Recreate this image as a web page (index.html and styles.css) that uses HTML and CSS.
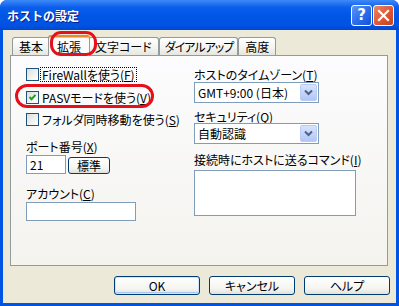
FILE: index.html
```html
<!DOCTYPE html>
<html>
<head>
    <title>ホストの設定</title>
    <link rel="stylesheet" href="styles.css">
</head>
<body>

<div class="window">
    <div class="titlebar">
        <span class="title">ホストの設定</span>
        <div class="caption-buttons">
            <span class="cap-btn help">?</span>
            <span class="cap-btn close">
                <svg width="19" height="19" viewBox="0 0 19 19">
                    <path d="M5 5 L14 14 M14 5 L5 14" stroke="#fff" stroke-width="2.2" stroke-linecap="square"/>
                </svg>
            </span>
        </div>
    </div> <!-- titlebar -->

    <div class="client">
        <div class="tabs">
            <div class="tab">基本</div>
            <div class="tab active">拡張</div>
            <div class="tab">文字コード</div>
            <div class="tab tab-narrow">ダイアルアップ</div>
            <div class="tab">高度</div>
        </div>

        <div class="panel">
            <div class="col col-left">
                <div class="check row-1">
                    <span class="box"></span>
                    <span class="focus">FireWallを使う(<u>F</u>)</span>
                </div>
                <div class="check row-2">
                    <span class="box">
                        <svg width="11" height="11" viewBox="0 0 11 11">
                            <path d="M2.5 5 L4.5 7.2 L8.5 2.8" stroke="#21A121" stroke-width="2" fill="none"/>
                        </svg>
                    </span>
                    <span>PASVモードを使う(<u>V</u>)</span>
                </div>
                <div class="check row-3">
                    <span class="box"></span>
                    <span>フォルダ同時移動を使う(<u>S</u>)</span>
                </div>

                <div class="label label-port">ポート番号(<u>X</u>)</div>
                <div class="port-row">
                    <div class="field port">21</div>
                    <div class="btn btn-small">標準</div>
                </div>

                <div class="label label-account">アカウント(<u>C</u>)</div>
                <div class="field account"></div>
            </div> <!-- left column -->

            <div class="col col-right">
                <div class="label">ホストのタイムゾーン(<u>T</u>)</div>
                <div class="select">
                    <span class="select-text">GMT+9:00 (日本)</span>
                    <span class="drop"><svg width="9" height="7" viewBox="0 0 9 7"><path d="M1 1.5 L4.5 5 L8 1.5" stroke="#4D6185" stroke-width="2" fill="none"/></svg></span>
                </div>

                <div class="label label-security">セキュリティ(<u>Q</u>)</div>
                <div class="select">
                    <span class="select-text">自動認識</span>
                    <span class="drop"><svg width="9" height="7" viewBox="0 0 9 7"><path d="M1 1.5 L4.5 5 L8 1.5" stroke="#4D6185" stroke-width="2" fill="none"/></svg></span>
                </div>

                <div class="label label-command">接続時にホストに送るコマンド(<u>I</u>)</div>
                <div class="field command"></div>
            </div> <!-- right column -->
        </div> <!-- panel -->

        <div class="buttons">
            <div class="btn default">OK</div>
            <div class="btn">キャンセル</div>
            <div class="btn">ヘルプ</div>
        </div>
    </div> <!-- client -->

    <!-- red annotation marks -->
    <div class="mark mark-tab"></div>
    <div class="mark mark-pasv"></div>
</div> <!-- window -->

</body>
</html>
```

FILE: styles.css
```css
body {
    margin: 0;
    font-family: "Noto Sans CJK JP", "Noto Sans", sans-serif;
    font-size: 12px;
    line-height: 13px;
    font-feature-settings: "palt";
    color: #000;
    background: #fff;
}

u {
    text-decoration: underline;
    text-underline-offset: 1px;
}

.window {
    position: relative;
    width: 399px;
    height: 306px;
    display: flex;
    flex-direction: column;
    background: #0054E3;
    border-radius: 7px 7px 0 0;
    overflow: hidden;
}

.titlebar {
    height: 30px;
    flex: none;
    display: flex;
    align-items: center;
    padding: 0 5px 0 7px;
    background: linear-gradient(to bottom, #3C8CF7 0%, #2A78F4 10%, #0A5EEC 25%, #0055E5 55%, #0053E2 85%, #0046D0 100%);
}

.title {
    flex: 1;
    color: #fff;
    font-weight: bold;
    font-size: 12px;
    font-feature-settings: normal;
    text-shadow: 1px 1px 0 #0A1E8A;
}

.caption-buttons {
    display: flex;
    gap: 1px;
    margin-top: 1px;
}

.cap-btn {
    width: 21px;
    height: 21px;
    box-sizing: border-box;
    border: 1px solid #fff;
    border-radius: 3px;
    display: flex;
    align-items: center;
    justify-content: center;
}

.help {
    background: linear-gradient(135deg, #5C97FA 0%, #2F6EEB 50%, #1651D8 100%);
    color: #fff;
    font-family: "DejaVu Sans", sans-serif;
    font-weight: bold;
    font-size: 15px;
}

.close {
    background: linear-gradient(135deg, #E9896A 0%, #E05A35 50%, #C8401E 100%);
}

.client {
    flex: 1;
    margin: 0 3px 3px 3px;
    padding-top: 7px;
    background: #ECE9D8;
    display: flex;
    flex-direction: column;
}

/* tabs */
.tabs {
    display: flex;
    align-items: flex-end;
    height: 18px;
    margin-left: 9px;
    position: relative;
    z-index: 2;
}

.tab {
    height: 18px;
    box-sizing: border-box;
    padding: 2px 6px 0 6px;
    border: 1px solid #919B9C;
    border-bottom: none;
    border-radius: 3px 3px 0 0;
    background: linear-gradient(to bottom, #FFFFFF, #F3F3EF 60%, #E6E5DE);
    white-space: nowrap;
}

.tab-narrow {
    padding: 2px 4px 0 5px;
    letter-spacing: -1px;
}

.tab.active {
    height: 21px;
    margin: 0 -2px -1px -2px;
    padding: 3px 8px 0 8px;
    border-top: 2px solid #E68B2C;
    background: #FCFCFE;
    box-shadow: inset 0 1px 0 #FFC83C;
    position: relative;
    z-index: 3;
}

/* tab body */
.panel {
    height: 211px;
    box-sizing: border-box;
    margin: 0 8px 0 7px;
    padding: 12px 0 0 15px;
    border: 1px solid #919B9C;
    background: linear-gradient(to bottom, #FCFCFE, #F4F3EE);
    display: grid;
    grid-template-columns: 168px 1fr;
}

.col {
    display: flex;
    flex-direction: column;
    align-items: flex-start;
}

.check {
    display: flex;
    align-items: center;
    gap: 3px;
    height: 13px;
    white-space: nowrap;
}

.row-2 {
    margin-top: 10px;
}

.row-3 {
    margin-top: 9px;
}

.box {
    width: 13px;
    height: 13px;
    box-sizing: border-box;
    border: 1px solid #1C5180;
    background: linear-gradient(135deg, #DCDCD7, #F6F6F4 70%, #FFFFFF);
    display: flex;
    align-items: center;
    justify-content: center;
}

.focus {
    outline: 1px dotted #000;
    outline-offset: 0;
    padding: 0 1px;
    margin-left: -1px;
}

.label {
    white-space: nowrap;
}

.label-port {
    margin-top: 14px;
}

.label-account {
    margin-top: 13px;
}

.field {
    box-sizing: border-box;
    border: 1px solid #7F9DB9;
    background: #fff;
    height: 19px;
    padding: 2px 3px;
}

.port-row {
    display: flex;
    align-items: flex-end;
    gap: 2px;
    margin-top: 2px;
}

.port {
    width: 40px;
}

.account {
    width: 110px;
    margin-top: 2px;
}

.select {
    width: 125px;
    height: 21px;
    box-sizing: border-box;
    margin-top: 1px;
    border: 1px solid #7F9DB9;
    background: #fff;
    display: flex;
    align-items: center;
    padding: 1px;
}

.select-text {
    flex: 1;
    padding-left: 2px;
    white-space: nowrap;
}

.drop {
    width: 17px;
    height: 17px;
    box-sizing: border-box;
    border: 1px solid #BACBF5;
    border-radius: 2px;
    background: linear-gradient(to bottom, #D7E3FD, #C1D3FB 60%, #B1C6F6);
    display: flex;
    align-items: center;
    justify-content: center;
}

.label-security {
    margin-top: 7px;
}

.label-security + .select {
    margin-top: 0;
}

.label-command {
    margin-top: 9px;
}

.command {
    width: 162px;
    height: 46px;
    margin-top: 4px;
}

/* push buttons */
.btn {
    box-sizing: border-box;
    border: 1px solid #003C74;
    border-radius: 3px;
    background: linear-gradient(to bottom, #FFFFFF, #F4F4F0 70%, #E3E0D6);
    display: flex;
    align-items: center;
    justify-content: center;
    white-space: nowrap;
}

.btn-small {
    width: 42px;
    height: 17px;
}

.buttons {
    display: flex;
    justify-content: flex-end;
    gap: 9px;
    margin: 10px 6px 0 0;
}

.buttons .btn {
    width: 86px;
    height: 19px;
}

.btn.default {
    box-shadow: inset 0 0 0 1px #CEE7FF, inset 0 -1px 0 1px #A9C5F2;
}

/* red annotation marks */
.mark {
    position: absolute;
    box-sizing: border-box;
    border: 3px solid #E5101A;
    z-index: 5;
}

.mark-tab {
    left: 50px;
    top: 31px;
    width: 47px;
    height: 25px;
    border-radius: 11px;
}

.mark-pasv {
    left: 15px;
    top: 84px;
    width: 139px;
    height: 24px;
    border-radius: 12px;
}
```
